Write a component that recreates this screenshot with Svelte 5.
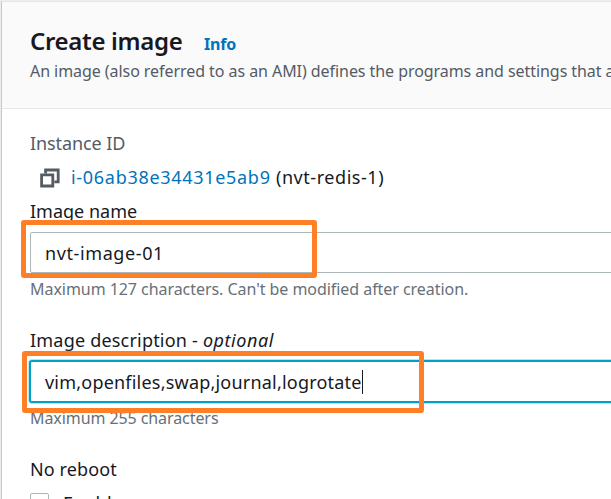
<script>
  const imageName = 'nvt-image-01';
  const description = 'vim,openfiles,swap,journal,logrotate';
</script>

<main class="page">
  <section class="panel">
    <header>
      <div class="heading">
        <h1>Create image</h1>
        <span class="info">Info</span>
      </div>
      <p>An image (also referred to as an AMI) defines the programs and settings that are applied</p>
    </header>

    <div class="content">
      <div class="text instance">Instance ID</div>
      <div class="instance-row">
        <svg class="copy" viewBox="0 0 20 20" width="20" height="20" fill="none" stroke="#545b64" stroke-width="2.8">
          <path d="M5.6 5.4V2h12.6v11.8H14.4" />
          <path d="M1.6 6.8h11.2v11.2H1.6z" />
        </svg>
        <span class="text link">i-06ab38e34431e5ab9</span>
        <span class="text name">(nvt-redis-1)</span>
      </div>

      <div class="field">
        <div class="text label-name">Image name</div>
        <div class="input"><span class="text value-name">{imageName}</span></div>
        <div class="hint hint-long">Maximum 127 characters. Can't be modified after creation.</div>
        <div class="mark mark-name"></div>
      </div>

      <div class="field second">
        <div class="text label-desc">Image description - <em>optional</em></div>
        <div class="input focused"><span class="text value-desc">{description}</span><i class="caret"></i></div>
        <div class="hint hint-short">Maximum 255 characters</div>
        <div class="mark mark-desc"></div>
      </div>

      <div class="text reboot">No reboot</div>
      <div class="check-row"><span class="box"></span><span class="text enable">Enable</span></div>
    </div>
  </section>
</main>

<style>
  :global(body) { overflow: hidden; }
  .page {
    box-sizing: border-box;
    width: 611px;
    height: 499px;
    padding: 1px 0 0 1px;
    overflow: hidden;
    background: #eceeee;
    color: #16191f;
    font-family: "Noto Sans", sans-serif;
  }
  .panel {
    height: 498px;
    box-sizing: border-box;
    overflow: hidden;
    background: #fff;
    border-left: 1px solid #c3caca;
    border-top: 1px solid #e6e8e8;
  }
  header {
    box-sizing: border-box;
    height: 107px;
    padding: 23px 0 0 28px;
    background: #fafafa;
    border-bottom: 1px solid #e5e8e9;
  }
  .heading { display: flex; height: 35px; align-items: flex-start; }
  h1 { margin: 0; width: 174px; font-size: 24px; font-weight: 600; line-height: 32px; letter-spacing: -0.32px; white-space: nowrap; }
  .info { color: #0073bb; font-size: 16px; font-weight: 700; line-height: 38px; letter-spacing: -0.2px; }
  p { margin: 0; color: #545b64; font-size: 16px; line-height: 22px; letter-spacing: -0.06px; white-space: nowrap; }
  .content { padding: 22px 0 0 28px; }
  .text { font-size: 18px; line-height: 24px; white-space: nowrap; }
  .instance { color: #545b64; letter-spacing: -0.1px; }
  .instance-row { display: flex; height: 24px; padding-top: 10px; }
  .copy { margin: 3px 11px 0 10px; flex: none; }
  .link { width: 205px; color: #0073bb; letter-spacing: 0.7px; }
  .name { letter-spacing: 0.55px; }
  .value-name { letter-spacing: 0.6px; }
  .field { position: relative; padding-top: 10px; height: 119px; }
  .second { height: 129px; }
  .label-desc { letter-spacing: 0.2px; }
  .label-desc em { letter-spacing: 0.55px; }
  .value-desc { letter-spacing: 0.21px; }
  .input {
    box-sizing: border-box;
    display: flex;
    align-items: center;
    width: 700px;
    height: 41px;
    margin-top: 9px;
    padding-left: 14px;
    background: #fff;
    border: 1px solid #aab7b8;
    border-radius: 2px;
  }
  .focused {
    height: 43px;
    margin: 8px 0 0 -1px;
    border: 2px solid #00a1c9;
    border-radius: 3px;
    box-shadow: 0 0 0 1px #b8e4ef;
  }
  .hint { margin-top: 6px; color: #687078; font-size: 16px; line-height: 20px; letter-spacing: -0.05px; white-space: nowrap; }
  .focused + .hint { margin-top: 5px; letter-spacing: -0.08px; }
  .caret { width: 1px; height: 24px; background: #16191f; }
  .mark { position: absolute; box-sizing: border-box; border: 5px solid #ff7f27; border-radius: 3px; }
  .mark-name { left: -9px; top: 31px; width: 296px; height: 58px; }
  .mark-desc { left: -8px; top: 33px; width: 402px; height: 62px; }
  .reboot { letter-spacing: 0.1px; }
  .check-row { display: flex; height: 24px; margin-top: 10px; }
  .box { box-sizing: border-box; width: 19px; height: 19px; margin: 2px 14px 0 0; border: 1px solid #aab7b8; border-radius: 2px; }
  .enable { letter-spacing: 0.4px; }
</style>
